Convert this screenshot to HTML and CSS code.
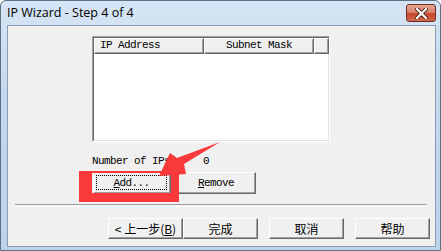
FILE: index.html
```html
<!DOCTYPE html>
<html lang="en">
    <head>
        <meta charset="utf-8">
        <title>IP Wizard - Step 4 of 4</title>
        <link rel="stylesheet" href="styles.css">
    </head>
    <body>
        <div class="window">
            <div class="titlebar">
                <span class="title">IP Wizard - Step 4 of 4</span>
                <button class="close-btn" aria-label="Close">
                    <svg width="13" height="11" viewBox="0 0 13 11">
                        <path d="M2 1 L11 10 M11 1 L2 10" stroke="#4a1a14" stroke-width="4" stroke-linecap="square"/>
                        <path d="M2 1 L11 10 M11 1 L2 10" stroke="#fff" stroke-width="2.2" stroke-linecap="square"/>
                    </svg>
                </button>
            </div>
            <div class="client">
                <div class="listview">
                    <div class="lv-header">
                        <div class="lv-col lv-col--ip">IP Address</div>
                        <div class="lv-col lv-col--mask">Subnet Mask</div>
                        <div class="lv-col lv-col--rest"></div>
                    </div>
                    <div class="lv-body"></div>
                </div>
                <div class="count-row">
                    <span class="count-label">Number of IPs:</span>
                    <span class="count-value">0</span>
                </div>
                <div class="action-row">
                    <button class="btn btn--mono btn--add"><span class="focus-ring"><u>A</u>dd...</span></button>
                    <button class="btn btn--mono btn--remove"><u>R</u>emove</button>
                </div>
                <div class="separator"></div>
                <div class="nav-row">
                    <div class="nav-pair">
                        <button class="btn btn--nav">&lt; 上一步(<u>B</u>)</button>
                        <button class="btn btn--nav">完成</button>
                    </div>
                    <button class="btn btn--nav">取消</button>
                    <button class="btn btn--nav">帮助</button>
                </div>

                <!-- annotation drawn over the dialog -->
                <div class="mark-box"></div>
                <svg class="mark-arrow" width="441" height="251" viewBox="0 0 441 251">
                    <polygon points="219,141 183,163 185,173 158,175 169,152 176,157" fill="#fa3a3a"/>
                </svg>
            </div>
        </div>
    </body>
</html>
```

FILE: styles.css
```css
html, body {
    margin: 0;
    padding: 0;
    background: #fff;
}
.window {
    position: relative;
    width: 441px;
    height: 251px;
    box-sizing: border-box;
    border: 1px solid #5f7184;
    border-radius: 6px 6px 0 0;
    background: linear-gradient(to bottom, #d6e5f5 0%, #c4d8ee 40%, #bcd3eb 100%);
    display: flex;
    flex-direction: column;
    overflow: hidden;
}
.titlebar {
    height: 24px;
    display: flex;
    align-items: center;
    justify-content: space-between;
    padding: 0 4px 0 6px;
}
.title {
    font-family: "Open Sans", "Noto Sans", sans-serif;
    font-size: 12.5px;
    color: #000;
    margin-top: -1px;
}
.close-btn {
    width: 30px;
    height: 18px;
    padding: 0;
    border: 1px solid #6b2a22;
    border-radius: 3px;
    background: linear-gradient(to bottom, #e8a493 0%, #d8826c 45%, #c7452d 55%, #d26a4f 100%);
    display: flex;
    align-items: center;
    justify-content: center;
}
.client {
    position: relative;
    flex: 1;
    margin: 0 4px 3px 6px;
    background: #f0f0f0;
    border: 1px solid #8a9cb0;
    font-family: "Liberation Mono", monospace;
    font-size: 11px;
    letter-spacing: -0.6px;
    color: #000;
}
.listview {
    margin: 10px 0 0 84px;
    width: 238px;
    height: 106px;
    box-sizing: border-box;
    border-top: 1px solid #a0a0a0;
    border-left: 1px solid #a0a0a0;
    border-right: 1px solid #fff;
    border-bottom: 1px solid #fff;
    display: flex;
    flex-direction: column;
}
.lv-header {
    display: flex;
    height: 16px;
    border-top: 1px solid #696969;
    border-left: 1px solid #696969;
}
.lv-col {
    box-sizing: border-box;
    height: 16px;
    line-height: 13px;
    font-family: "Liberation Mono", monospace;
    background: #f0f0f0;
    border-top: 1px solid #fff;
    border-left: 1px solid #fff;
    border-right: 1px solid #696969;
    border-bottom: 1px solid #696969;
    box-shadow: inset -1px -1px 0 #a0a0a0;
    white-space: nowrap;
    overflow: hidden;
}
.lv-col--ip {
    width: 110px;
    padding-left: 5px;
}
.lv-col--mask {
    width: 110px;
    text-align: center;
}
.lv-col--rest {
    flex: 1;
}
.lv-body {
    flex: 1;
    background: #fff;
    border-left: 1px solid #696969;
    border-right: 1px solid #e3e3e3;
    border-bottom: 1px solid #e3e3e3;
}
.count-row {
    display: flex;
    margin: 13px 0 0 84px;
    height: 12px;
    line-height: 12px;
}
.count-label {
    width: 111px;
}
.action-row {
    display: flex;
    gap: 5px;
    margin: 5px 0 0 85px;
}
.btn {
    box-sizing: border-box;
    padding: 0;
    background: #f0f0f0;
    color: #000;
    border-top: 1px solid #fff;
    border-left: 1px solid #fff;
    border-right: 1px solid #696969;
    border-bottom: 1px solid #696969;
    box-shadow: inset -1px -1px 0 #a0a0a0;
    display: flex;
    align-items: center;
    justify-content: center;
}
.btn--mono {
    height: 22px;
    font-family: "Liberation Mono", monospace;
    font-size: 11px;
    letter-spacing: -0.6px;
}
.btn--add {
    width: 78px;
    padding: 2px 3px 3px 2px;
}
.btn--remove {
    width: 80px;
}
.focus-ring {
    flex: 1;
    align-self: stretch;
    display: flex;
    align-items: center;
    justify-content: center;
    border: 1px dotted #000;
}
.separator {
    margin: 10px 8px 0 7px;
    height: 1px;
    border-top: 1px solid #a0a0a0;
    border-bottom: 1px solid #fff;
}
.nav-row {
    display: flex;
    gap: 11px;
    margin: 11px 0 0 100px;
}
.nav-pair {
    display: flex;
}
.btn--nav {
    width: 75px;
    height: 21px;
    font-family: "Noto Sans CJK SC", sans-serif;
    font-size: 12px;
    letter-spacing: 0;
}
.mark-box {
    position: absolute;
    left: 71px;
    top: 145px;
    width: 100px;
    height: 31px;
    box-sizing: border-box;
    border-style: solid;
    border-color: #fa3a3a;
    border-width: 2px 8px 9px 13px;
}
.mark-arrow {
    position: absolute;
    left: -7px;
    top: -25px;
    pointer-events: none;
}
```
